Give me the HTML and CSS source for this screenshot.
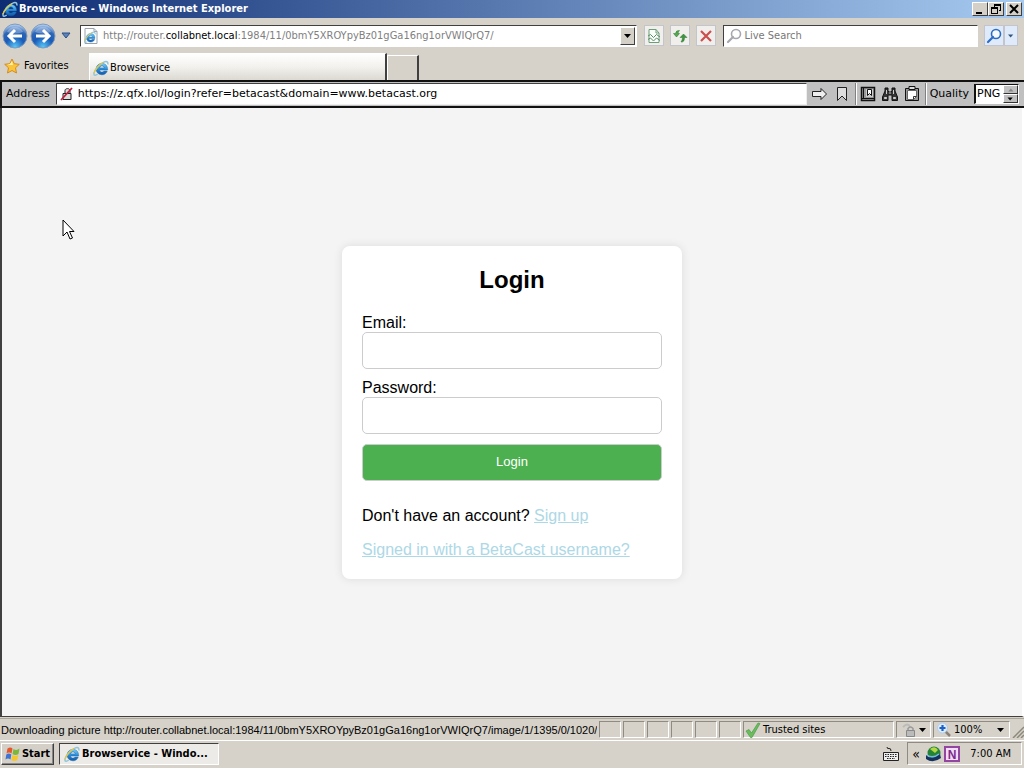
FILE: index.html
```html
<!DOCTYPE html>
<html lang="en">
<head>
<meta charset="utf-8">
<title>Browservice - Windows Internet Explorer</title>
<link rel="stylesheet" href="styles.css">
</head>
<body>
<svg class="defs" aria-hidden="true">
  <defs>
    <linearGradient id="blue" x1="0" y1="0" x2="0" y2="1"><stop offset="0" stop-color="#7ed0f6"/><stop offset=".5" stop-color="#2a8edb"/><stop offset="1" stop-color="#1257a6"/></linearGradient>
    <radialGradient id="orb" cx=".5" cy=".95" r=".9"><stop offset="0" stop-color="#58c8f8"/><stop offset=".45" stop-color="#1a5cb8"/><stop offset=".75" stop-color="#2f66b4"/><stop offset="1" stop-color="#a9c8ec"/></radialGradient>
    <symbol id="ie" viewBox="0 0 16 16">
      <path d="M14.600 10H6.600c.2 1.400 1.100 2.100 2.300 2.100 1 0 1.600-.4 2-1h3.300C13.500 13.400 11.600 14.800 9 14.800c-3.400 0-5.900-2.400-5.900-5.700S5.600 3.400 9 3.400s5.900 2.600 5.600 6.600zM6.700 7.900h4.500C11 6.600 10.100 5.900 8.900 5.900S6.900 6.600 6.700 7.900z" fill="url(#blue)" stroke="#1767ad" stroke-width=".5"/>
      <path d="M14.800 4.500c.5-2.800-1.300-3.700-4-2.400C6.700 3.900 1.600 9.800 1 13.200c-.4 2.500 1.500 2.400 3.700 1" fill="none" stroke="#8fc6dc" stroke-width="1.500"/>
      <path d="M1 13.200C1.700 9.800 6 5 10 2.600" fill="none" stroke="#edc52d" stroke-width="1.200"/>
    </symbol>
    <symbol id="lens" viewBox="0 0 16 16"><circle cx="10" cy="6" r="4.500" fill="#fff" fill-opacity=".7" stroke="currentColor" stroke-width="1.600"/><path d="M7 9l-5 5" stroke="currentColor" stroke-width="2.200" stroke-linecap="round"/></symbol>
    <symbol id="down" viewBox="0 0 8 8"><path d="M0 2h7L3.500 6z" fill="currentColor"/></symbol>
  </defs>
</svg>

<header class="titlebar">
  <svg class="i16"><use href="#ie"/></svg>
  <h1>Browservice - Windows Internet Explorer</h1>
  <div class="winbtns">
    <button aria-label="Minimize"><svg viewBox="0 0 14 12"><path d="M3 9h6v2H3z"/></svg></button>
    <button aria-label="Restore"><svg viewBox="0 0 14 12"><path d="M5 1h7v7h-2V7h1V3H6v1H5zM2 4h7v7H2zm1 2v4h5V6z" fill-rule="evenodd"/></svg></button>
    <button class="close" aria-label="Close"><svg viewBox="0 0 14 12"><path d="M3 2l8 8M11 2l-8 8" stroke="#000" stroke-width="2"/></svg></button>
  </div>
</header>

<nav class="navbar">
  <button class="orb" aria-label="Back"><svg viewBox="0 0 26 26"><circle cx="13" cy="13" r="12" fill="url(#orb)" stroke="#8199bd"/><path d="M5 9a9 9 0 0 1 16 0q-8 3-16 0z" fill="#fff" opacity=".3"/><path d="M20 13H7m6-6l-6 6 6 6" fill="none" stroke="#fff" stroke-width="3"/></svg></button>
  <button class="orb" aria-label="Forward"><svg viewBox="0 0 26 26"><circle cx="13" cy="13" r="12" fill="url(#orb)" stroke="#8199bd"/><path d="M5 9a9 9 0 0 1 16 0q-8 3-16 0z" fill="#fff" opacity=".3"/><path d="M6 13h13m-6-6l6 6-6 6" fill="none" stroke="#fff" stroke-width="3"/></svg></button>
  <button class="recent" aria-label="Recent pages"><svg viewBox="0 0 10 7"><path d="M1 1h8L5 6z" fill="#5b86bd" stroke="#2a4e88"/></svg></button>
  <div class="field urlfield">
    <svg class="i16" viewBox="0 0 16 16"><path d="M2 .5h9l3 3v12H2z" fill="#fff" stroke="#9aa3ad"/><path d="M11 .5v3h3" fill="none" stroke="#9aa3ad"/><use href="#ie" x="1" y="3" width="12" height="12"/></svg>
    <span class="url">http://router.<b>collabnet.local</b>:1984/11/0bmY5XROYpyBz01gGa16ng1orVWIQrQ7/</span>
    <button class="drop" aria-label="Show addresses"><svg class="i8"><use href="#down"/></svg></button>
  </div>
  <div class="tools">
    <button class="tool" aria-label="Compatibility view"><svg viewBox="0 0 16 16"><path d="M3 1.500h7L13 5v9.500H3z" fill="#f7fff7" stroke="#6f9c7a"/><path d="M10 1.500V5h3" fill="none" stroke="#6f9c7a"/><path d="M2 8l2.500-1.500 3 3 3-3L14 9M2 11.500L4.500 10l3 3 3-3 3.500 2.500" fill="none" stroke="#5d8c6a"/></svg></button>
    <button class="tool" aria-label="Refresh"><svg viewBox="0 0 16 16"><path d="M7.500 2.500Q4 2 3.500 5.500H1.500l3 3.500 3-3.500H6Q6 4 7.500 2.500z" fill="#55a84f" stroke="#25772c" stroke-width=".5"/><path d="M9 14q3.500.5 3.500-4.500h2.500L11.500 6 8 9.500h2.500q0 2.500-1.500 4.500z" fill="#3f9440" stroke="#25772c" stroke-width=".5"/></svg></button>
    <button class="tool" aria-label="Stop"><svg viewBox="0 0 16 16"><path d="M3 3l10 10M13 3L3 13" stroke="#cc4f4f" stroke-width="2.200"/></svg></button>
  </div>
  <div class="field search">
    <svg class="i16 grey"><use href="#lens"/></svg>
    <input type="text" aria-label="Live Search" placeholder="Live Search">
  </div>
  <div class="go">
    <button class="tool" aria-label="Search"><svg class="i16 azure"><use href="#lens"/></svg></button>
    <button class="tool slim" aria-label="Search options"><svg class="i8"><use href="#down"/></svg></button>
  </div>
</nav>

<div class="tabrow">
  <button class="fav"><svg class="i16" viewBox="0 0 16 16"><path d="M8 1l2.200 4.700 5.100.6-3.800 3.500 1 5.200L8 12.500 3.500 15l1-5.200L.7 6.300l5.100-.6z" fill="#fbc53b" stroke="#d58b1c"/><path d="M8 3l1 4-6 0 3-1z" fill="#fff2b0"/></svg>Favorites</button>
  <button class="tab"><svg class="i16"><use href="#ie"/></svg>Browservice</button>
  <button class="newtab" aria-label="New tab"></button>
</div>

<div class="addressbar">
  <label for="addr">Address</label>
  <div class="addr">
    <svg class="i16" viewBox="0 0 16 16"><path d="M4 7.500h8v6H4zM6 7V4.500C6 2 11 2 11 4.500V7" fill="#ddd" stroke="#222"/><path d="M2 14L13 2" stroke="#c2203c" stroke-width="1.800"/></svg>
    <input id="addr" type="text" value="https://z.qfx.lol/login?refer=betacast&amp;domain=www.betacast.org">
  </div>
  <div class="group">
    <button aria-label="Go"><svg class="i16" viewBox="0 0 16 16"><path d="M.5 5.500H9V2.500l5.500 5.500L9 13.500v-3H.5z" fill="#eee" stroke="#222"/></svg></button>
    <button aria-label="Bookmark"><svg class="i16" viewBox="0 0 16 16"><path d="M3.500 1.500h9v13L8 10l-4.500 4.500z" fill="#ddd" stroke="#222"/></svg></button>
  </div>
  <div class="group">
    <button aria-label="Bookmarks"><svg class="i16" viewBox="0 0 16 16"><path d="M1.500 1.500h13v13h-13z" fill="#999" stroke="#111" stroke-width="1.500"/><path d="M3.500 1v12M2 12.500h12" stroke="#111"/><path d="M6 3h7v8H6z" fill="#ccc"/><path d="M7.500 3.500h4v6l-2-2-2 2z" fill="#fff" stroke="#111"/></svg></button>
    <button aria-label="Find"><svg class="i16" viewBox="0 0 16 16"><path d="M3 5V2h3v3l1 1h2l1-1V2h3v3l2.500 6v3.500H10V9H6v5.500H.5V11z" fill="#333" stroke="#111"/><path d="M2.500 11.500h2v1h-2zM11.500 11.500h2v1h-2zM4.500 4v4M11.500 4v4M7 7h2" fill="#eee" stroke="#ccc"/></svg></button>
    <button aria-label="Clipboard"><svg class="i16" viewBox="0 0 16 16"><path d="M1.500 2.500h13v12h-13z" fill="#999" stroke="#111"/><path d="M5 .5h6v3H5z" fill="#ddd" stroke="#111"/><path d="M3.500 4.500h9v6l-3 3h-6z" fill="#fff" stroke="#666"/><path d="M12.500 10.500h-3v3" fill="none" stroke="#333"/></svg></button>
  </div>
  <div class="group quality">
    <label for="quality">Quality</label>
    <div class="spin">
      <select id="quality"><option>PNG</option></select>
      <span class="steps"><button aria-label="Up"><svg class="i8 up"><use href="#down"/></svg></button><button aria-label="Down"><svg class="i8"><use href="#down"/></svg></button></span>
    </div>
  </div>
</div>

<main class="page">
  <svg class="cursor" viewBox="0 0 13 22" aria-hidden="true"><path d="M1 1v16l4-4 3 7 2.500-1L7.500 12.500H12z" fill="#fff" stroke="#000"/></svg>
  <form class="card">
    <h2>Login</h2>
    <label for="email">Email:</label>
    <input id="email" type="email">
    <label for="password">Password:</label>
    <input id="password" type="password">
    <button type="button">Login</button>
    <p>Don't have an account? <a href="#">Sign up</a></p>
    <p><a href="#">Signed in with a BetaCast username?</a></p>
  </form>
</main>

<div class="statusbar">
  <span class="status">Downloading picture http://router.collabnet.local:1984/11/0bmY5XROYpyBz01gGa16ng1orVWIQrQ7/image/1/1395/0/1020/</span>
  <i class="cell"></i><i class="cell"></i><i class="cell"></i><i class="cell"></i><i class="cell"></i><i class="cell"></i>
  <div class="pane zone"><svg class="i16" viewBox="0 0 16 16"><path d="M1 9l3-1.500L6.500 11 13 1l2 .5L7 15.500H5.500z" fill="#69be5b" stroke="#3c9440" stroke-width=".6"/></svg>Trusted sites</div>
  <button class="pane lock" aria-label="Protected mode"><svg class="i16" viewBox="0 0 16 16"><path d="M2 5q5-5 7 0" fill="none" stroke="#bbb" stroke-width="2"/><path d="M7 9V6.500q2.500-3 5 0V9" fill="none" stroke="#999" stroke-width="1.500"/><path d="M5.500 8.500h8v6h-8z" fill="#bbb" stroke="#888"/></svg><svg class="i8"><use href="#down"/></svg></button>
  <button class="pane zoom"><svg class="i16" viewBox="0 0 16 16"><path d="M9 9l5 5" stroke="#8b8378" stroke-width="2.500"/><circle cx="6.500" cy="6" r="5" fill="#dcecff" stroke="#b4cce8"/><path d="M6.500 3v6M3.500 6h6" stroke="#1d62c4" stroke-width="2.200"/></svg>100%<svg class="i8 end"><use href="#down"/></svg></button>
  <svg class="grip" viewBox="0 0 12 12"><path d="M1 12L12 1M5 12l7-7M9 12l3-3" stroke="#8c887c" stroke-width="1.500"/></svg>
</div>

<footer class="taskbar">
  <button class="start"><svg class="i16" viewBox="0 0 16 16"><path d="M2.500 2.500q3-2 5 0L6.500 7.500q-2.500-2-5 0z" fill="#e8572b"/><path d="M8.500 3q3 2 6-.5L13.500 8q-3 2-6 0z" fill="#7cb73a"/><path d="M1.300 8.500q2.500-2 5 0L5.500 13.500q-2.500-2-5 0z" fill="#3f74d2"/><path d="M7.300 9q3 2 6 0l-1 5q-3 2-6 0z" fill="#f6c62e"/></svg>Start</button>
  <button class="task"><svg class="i16"><use href="#ie"/></svg>Browservice - Windo...</button>
  <svg class="i16 keyboard" viewBox="0 0 16 16"><path d="M4 1q0 2 2 1.500T8 5" fill="none" stroke="#222"/><path d="M.5 6.500h15v8H.5z" fill="#eee" stroke="#222"/><path d="M2 8.500h12M2 10.500h12M4 12.500h8" stroke="#222" stroke-dasharray="1.500 1"/></svg>
  <div class="tray">
    <span class="chev">«</span>
    <svg class="i16" viewBox="0 0 16 16"><circle cx="8" cy="7" r="6.500" fill="#238436"/><path d="M4 3q5-4 8 1l-3 3z" fill="#b5d645"/><path d="M0 9q5 6 14-1l1 4q-8 6-15 1z" fill="#14325c"/><path d="M1 9q6 4 12-1" fill="none" stroke="#7bb8ea" stroke-width="1.500"/></svg>
    <svg class="i16" viewBox="0 0 16 16"><path d="M1 1h14v14H1z" fill="#f3dcf6" stroke="#9346a0" stroke-width="2"/><text x="8" y="13" class="note">N</text></svg>
    <time>7:00 AM</time>
  </div>
</footer>
</body>
</html>
```
FILE: styles.css
```css
* { box-sizing: border-box; }
html, body { height: 100%; }
body {
  margin: 0;
  display: flex;
  flex-direction: column;
  background: #d6d2c9;
  color: #000;
  font: 11px/14px "DejaVu Sans Condensed", "DejaVu Sans", sans-serif;
  overflow: hidden;
}
button, input, select { font: inherit; color: inherit; margin: 0; }
button { display: flex; align-items: center; justify-content: center; padding: 0; border: 0; background: none; white-space: nowrap; }
svg { display: block; flex: none; }
.defs { position: absolute; width: 0; height: 0; }
.i16 { width: 16px; height: 16px; }
.i8 { width: 8px; height: 8px; }

.titlebar {
  flex: none;
  display: flex;
  align-items: center;
  gap: 1px;
  height: 18px;
  padding: 0 2px;
  background: linear-gradient(90deg, #0d2c72, #a6caf0);
  color: #fff;
}
.titlebar h1 { flex: 1; margin: 0; font-size: 11px; line-height: 18px; font-weight: bold; }
.winbtns { display: flex; }
.winbtns button { width: 16px; height: 14px; background: #d4d0c8; border: 1px solid; border-color: #fff #404040 #404040 #fff; }
.winbtns svg { width: 14px; height: 12px; }
.winbtns .close { margin-left: 2px; }

.navbar { flex: none; display: flex; align-items: center; height: 35px; padding: 0 6px 0 1px; }
.orb { width: 28px; }
.orb svg { width: 26px; height: 26px; }
.recent { width: 18px; }
.recent svg { width: 10px; height: 7px; }
.field { display: flex; align-items: center; height: 22px; background: #fff; border: 1px solid; border-color: #404040 #fff #fff #404040; }
.urlfield { flex: 560; margin-left: 5px; padding: 1px 1px 1px 2px; color: #808080; }
.url { flex: 1; padding-left: 4px; white-space: nowrap; overflow: hidden; }
.url b { font-weight: normal; color: #000; }
.drop { width: 15px; height: 18px; background: #d4d0c8; border: 1px solid; border-color: #fff #404040 #404040 #fff; color: #000; }
.tools { display: flex; gap: 6px; margin: 0 7px; }
.tool { width: 20px; height: 21px; background: #f0efec; border: 1px solid #c4c4cc; }
.tool > svg:not(.i8) { width: 16px; height: 16px; }
.search { flex: 252; padding: 0 2px; }
.search input { flex: 1; min-width: 0; padding: 0 2px; border: 0; background: none; outline: 0; }
.search input::placeholder { color: #777; opacity: 1; }
.grey { color: #a8a6ae; }
.azure { color: #2b6cc4; }
.go { display: flex; margin-left: 6px; }
.go .tool { background: #dfeafa; }
.go .slim { width: 14px; color: #33577e; }
.slim svg { width: 6px; height: 6px; }

.tabrow { flex: none; display: flex; align-items: flex-end; height: 27px; padding-left: 4px; }
.fav { gap: 4px; width: 66px; height: 27px; padding-bottom: 2px; justify-content: flex-start; }
.tab {
  width: 298px;
  height: 27px;
  margin-left: 19px;
  padding: 2px 3px 0;
  gap: 1px;
  justify-content: flex-start;
  background: linear-gradient(#fff, #f2f1ed 50%, #dcd9d2);
  border: solid;
  border-width: 1px 2px 0 1px;
  border-color: #fff #404040 #fff #fff;
}
.newtab { width: 32px; height: 25px; border: solid; border-width: 1px 2px 0 1px; border-color: #fff #404040 #fff #fff; }

.addressbar {
  flex: none;
  display: flex;
  align-items: center;
  height: 28px;
  padding: 0 5px 0 4px;
  border: solid #111;
  border-width: 2px 0 2px 2px;
  background: #c0c0c0;
  font-family: "DejaVu Sans", sans-serif;
}
.addr { flex: 1; display: flex; align-items: center; height: 22px; margin-left: 6px; padding-left: 2px; background: #fff; border: 1px solid; border-color: #404040 #eee #eee #404040; }
.addr input { flex: 1; min-width: 0; padding: 0 3px; border: 0; outline: 0; background: none; }
.group { display: flex; align-items: center; gap: 6px; height: 22px; padding: 0 5px 0 4px; border-left: 1px solid #808080; box-shadow: inset 1px 0 #fff; }
.addr + .group { border-left-color: #c0c0c0; box-shadow: none; }
.quality { gap: 5px; padding-right: 0; }
.spin { display: flex; width: 45px; height: 20px; background: #fff; border: 1px solid; border-color: #111 #fff #fff #111; border-left-width: 2px; }
.spin select { flex: 1; min-width: 0; padding: 0 1px; border: 0; background: none; appearance: none; }
.steps { display: flex; flex-direction: column; width: 15px; }
.steps button { flex: 1; background: #c0c0c0; border: 1px solid; border-color: #fff #333 #333 #fff; }
.steps svg { width: 7px; height: 6px; }
.up { transform: rotate(180deg); color: #888; }

.page {
  flex: 1;
  min-height: 0;
  position: relative;
  display: flex;
  align-items: center;
  justify-content: center;
  border: solid;
  border-width: 0 2px 1px 2px;
  border-color: #404040 #fff #404040 #404040;
  background: #f4f4f4;
  font: 16px/18px "Liberation Sans", Arial, sans-serif;
}
.cursor { position: absolute; left: 60px; top: 111px; width: 13px; height: 22px; }
.card { width: 340px; padding: 20px; background: #fff; border-radius: 8px; box-shadow: 0 0 10px rgba(0, 0, 0, .1); }
.card h2 { margin: 0 0 20px; font-size: 24px; line-height: 28px; text-align: center; }
.card label { display: block; }
.card input { display: block; width: 100%; height: 37px; margin-bottom: 10px; padding: 10px; border: 1px solid #ccc; border-radius: 5px; }
.card button { width: 100%; height: 37px; border: 1px solid #ccc; border-radius: 5px; background: #4caf50; color: #fff; font-size: 13px; }
.card p { margin: 16px 0 0; }
.card button + p { margin-top: 26px; }
.card a { color: #add8e6; }

.statusbar { flex: none; display: flex; align-items: stretch; gap: 2px; height: 23px; margin-top: 1px; padding: 2px 0; border-top: 1px solid #aaa69c; border-bottom: 1px solid #fff; }
.status { flex: 1; padding: 1px 0 1px 1px; line-height: 16px; white-space: nowrap; overflow: hidden; font-family: "Liberation Sans", Arial, sans-serif; }
.cell, .pane { border: 1px solid; border-color: #8f8b82 #fff #fff #8f8b82; }
.cell { width: 22px; }
.pane { display: flex; align-items: center; gap: 2px; padding: 0 1px; }
.zone { width: 151px; }
.lock { width: 35px; }
.zoom { width: 77px; padding: 0 4px 0 2px; justify-content: flex-start; }
.zoom .end { margin-left: auto; }
.grip { width: 12px; height: 12px; align-self: flex-end; }

.taskbar { flex: none; display: flex; align-items: center; height: 27px; padding: 0 2px 2px 1px; }
.start, .task { font-weight: bold; height: 22px; }
.start { width: 53px; gap: 1px; background: #d4d0c8; border: 1px solid; border-color: #fff #404040 #404040 #fff; box-shadow: inset -1px -1px #888; }
.task { width: 160px; margin-left: 5px; padding: 0 4px; gap: 2px; justify-content: flex-start; background: #edebe7; border: 1px solid; border-color: #404040 #fff #fff #404040; }
.keyboard { margin-left: auto; }
.tray { display: flex; align-items: center; gap: 2px; height: 23px; margin-left: 8px; padding: 0 10px 0 4px; border: 1px solid; border-color: #8f8b82 #fff #fff #8f8b82; }
.chev { width: 12px; font-size: 14px; }
.note { font: bold 12px "Liberation Sans", sans-serif; fill: #7c2b8c; text-anchor: middle; }
.tray time { margin-left: 8px; }
```
